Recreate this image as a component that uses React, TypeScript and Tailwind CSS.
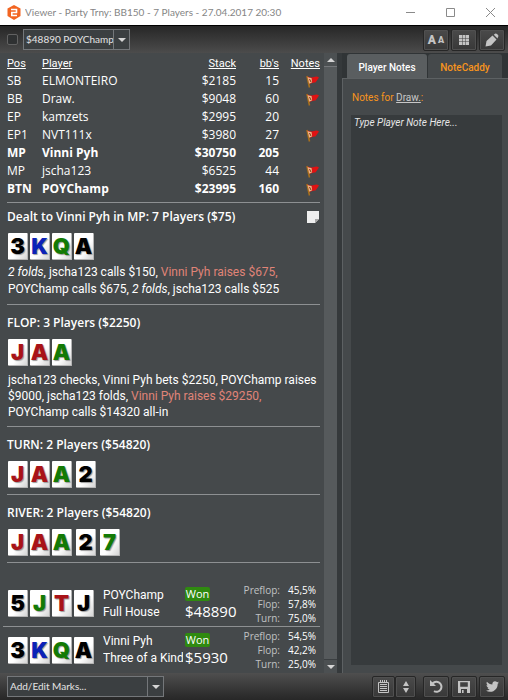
import { useState } from "react";
import clsx from "clsx";
import { FaTwitter } from "react-icons/fa";

const players = [
  { pos: "SB", name: "ELMONTEIRO", stack: "$2185", bbs: 15, note: true },
  { pos: "BB", name: "Draw.", stack: "$9048", bbs: 60, note: true },
  { pos: "EP", name: "kamzets", stack: "$2995", bbs: 20, note: false },
  { pos: "EP1", name: "NVT111x", stack: "$3980", bbs: 27, note: true },
  { pos: "MP", name: "Vinni Pyh", stack: "$30750", bbs: 205, note: false, bold: true },
  { pos: "MP", name: "jscha123", stack: "$6525", bbs: 44, note: true },
  { pos: "BTN", name: "POYChamp", stack: "$23995", bbs: 160, note: true, bold: true },
];

const results = [
  {
    cards: ["5s", "Jc", "Th", "Js"],
    name: "POYChamp",
    hand: "Full House",
    won: "$48890",
    odds: [["Preflop:", "45,5%"], ["Flop:", "57,8%"], ["Turn:", "75,0%"]],
  },
  {
    cards: ["3s", "Kd", "Qc", "As"],
    name: "Vinni Pyh",
    hand: "Three of a Kind",
    won: "$5930",
    odds: [["Preflop:", "54,5%"], ["Flop:", "42,2%"], ["Turn:", "25,0%"]],
  },
];

const suitColors: Record<string, string> = {
  s: "text-black",
  h: "text-[#a81318]",
  d: "text-[#0a22b8]",
  c: "text-[#137a05]",
};

function Card({ card }: { card: string }) {
  return (
    <span
      className={clsx(
        "flex h-[27px] w-5 items-center justify-center rounded-[1px] border-r border-b border-[#b5b5b5] bg-linear-to-br from-white from-60% to-[#d4d4d4] font-['Inter',sans-serif] text-[22px] leading-none font-black [text-shadow:1px_1px_1px_#999]",
        suitColors[card[1]]
      )}
    >
      {card[0]}
    </span>
  );
}

function Cards({ cards }: { cards: string[] }) {
  return (
    <div className="flex gap-0.5 pl-px">
      {cards.map((card, i) => (
        <Card key={i} card={card} />
      ))}
    </div>
  );
}

// Board cards, the turn and river stand a bit apart from the flop
function Board({ turn, river }: { turn?: string; river?: string }) {
  return (
    <div className="flex gap-1">
      <Cards cards={["Jh", "Ah", "Ac"]} />
      {turn && <Card card={turn} />}
      {river && <Card card={river} />}
    </div>
  );
}

function Flag() {
  return (
    <svg width="13" height="13" viewBox="0 0 13 13" className="ml-auto block">
      <path d="M1 1L3.5 12.5" stroke="#a8701c" strokeWidth="1.6" />
      <path d="M1.5 1.5Q5 3 8 2T13 2.5L9.5 7.5Q7 7 3.5 9Z" fill="#e01212" />
      <path d="M1.5 2Q3.5 3 5.5 3L6.2 7.2L3.2 8.8Z" fill="#e8b88a" />
      <path d="M3.5 4L5 7" stroke="#8a3010" />
    </svg>
  );
}

function ToolButton({ label, className, children }: { label: string; className?: string; children: React.ReactNode }) {
  return (
    <button
      aria-label={label}
      className={clsx(
        "flex h-[22px] items-center justify-center rounded-[2px] border border-[#262626] bg-linear-to-b from-[#4a4a4a] to-[#383838] text-[#c4c4c4] shadow-[inset_0_0_0_1px_#505050]",
        className ?? "w-[26px]"
      )}
    >
      {children}
    </button>
  );
}

function DropDown({ label, value, className }: { label: string; value: string; className: string }) {
  return (
    <div className={clsx("relative h-[21px] border border-[#74777a] bg-[#3b3f41]", className)}>
      <select
        aria-label={label}
        className="block h-full w-full appearance-none pr-3 pl-0.5 font-['Lato',sans-serif] text-[10px] leading-[19px] text-[#e4e4e4] outline-none"
      >
        <option>{value}</option>
      </select>
      <span className="pointer-events-none absolute inset-y-0 right-0 flex w-4 items-center justify-center border-l border-[#74777a]">
        <svg width="8" height="4" viewBox="0 0 8 4">
          <path d="M0 0H8L4 4Z" fill="#d5d5d5" />
        </svg>
      </span>
    </div>
  );
}

function StreetTitle({ children }: { children: React.ReactNode }) {
  return <h2 className="text-[12px] leading-4 font-semibold">{children}</h2>;
}

function TitleBar() {
  return (
    <header className="flex h-[25px] shrink-0 items-center bg-white pr-[13px] pl-[7px] text-[#858585]">
      <svg width="14" height="15" viewBox="0 0 14 15">
        <path d="M7 0L13.5 3.5V11L7 15L.5 11V3.5Z" fill="#f26522" />
        <path d="M4 4.5H9.5V7.5H4.8V10.5H10" fill="none" stroke="#fff" strokeWidth="1.6" />
      </svg>
      <h1 className="ml-1 flex-1 truncate font-['Lato',sans-serif] text-[10px]">
        Viewer - Party Trny: BB150 - 7 Players - 27.04.2017 20:30
      </h1>
      <div className="flex items-center gap-[31px]">
        <button aria-label="Minimize">
          <svg width="9" height="9" viewBox="0 0 9 9">
            <path d="M0 4.5H9" stroke="#8a8a8a" />
          </svg>
        </button>
        <button aria-label="Maximize">
          <svg width="9" height="9" viewBox="0 0 9 9">
            <path d="M.5 .5H8.5V8.5H.5Z" fill="none" stroke="#8a8a8a" />
          </svg>
        </button>
        <button aria-label="Close">
          <svg width="9" height="9" viewBox="0 0 9 9">
            <path d="M0 0L9 9M9 0L0 9" stroke="#8a8a8a" />
          </svg>
        </button>
      </div>
    </header>
  );
}

function Toolbar() {
  return (
    <div className="flex h-7 shrink-0 items-center border-t border-black bg-linear-to-b from-[#272727] to-[#4c4c4c] pr-[3px] pl-[7px]">
      <input
        type="checkbox"
        aria-label="Mark hand"
        className="size-[11px] appearance-none rounded-[2px] border border-[#626262] bg-[#2f3132]"
      />
      <DropDown label="Hand" value="$48890 POYChamp" className="ml-[5px] w-[107px]" />
      <div className="ml-auto flex gap-0.5">
        <ToolButton label="Text size">
          <span className="font-['Roboto',sans-serif] text-[12px] leading-none font-black">A</span>
          <span className="ml-[2px] pt-[2px] font-['Roboto',sans-serif] text-[9px] leading-none font-black">A</span>
        </ToolButton>
        <ToolButton label="Grid">
          <svg width="10" height="10" viewBox="0 0 10 10" fill="currentColor">
            <path d="M0 0H3V3H0ZM3.5 0H6.5V3H3.5ZM7 0H10V3H7ZM0 3.5H3V6.5H0ZM3.5 3.5H6.5V6.5H3.5ZM7 3.5H10V6.5H7ZM0 7H3V10H0ZM3.5 7H6.5V10H3.5ZM7 7H10V10H7Z" />
          </svg>
        </ToolButton>
        <ToolButton label="Edit">
          <svg width="14" height="14" viewBox="0 0 14 14" fill="currentColor">
            <path d="M.5 13.5L1.5 8L7.5 2.5L11.5 6.5L6 12.5ZM8.8 1.7L10 .8Q11 0 12 1L13 2Q14 3 13 4L12.5 5.4Z" />
          </svg>
        </ToolButton>
      </div>
    </div>
  );
}

function PlayerTable() {
  return (
    <table className="w-full table-fixed text-[12px]">
      <thead>
        <tr className="h-[17px] font-['Roboto',sans-serif] text-[11px] leading-4 underline">
          <th className="w-[35px] text-left font-normal">Pos</th>
          <th className="text-left font-normal">Player</th>
          <th className="w-[60px] text-right font-normal">Stack</th>
          <th className="w-[43px] text-right font-normal">bb's</th>
          <th className="w-[41px] text-right font-normal">Notes</th>
        </tr>
      </thead>
      <tbody>
        {players.map((p) => (
          <tr key={p.name} className={clsx("h-[18px] leading-[18px]", p.bold && "font-bold")}>
            <td>{p.pos}</td>
            <td>{p.name}</td>
            <td className="text-right">{p.stack}</td>
            <td className="text-right">{p.bbs}</td>
            <td className="pr-px">{p.note && <Flag />}</td>
          </tr>
        ))}
      </tbody>
    </table>
  );
}

function ScrollBar() {
  return (
    <div className="flex w-[13px] shrink-0 flex-col bg-[#565a5c]">
      <button aria-label="Scroll up" className="flex h-[14px] items-center justify-center border-b border-[#74777a] bg-[#4c5052]">
        <svg width="8" height="4" viewBox="0 0 8 4">
          <path d="M0 4H8L4 0Z" fill="#d5d5d5" />
        </svg>
      </button>
      <div className="flex-1" />
      <button aria-label="Scroll down" className="flex h-[14px] items-center justify-center border-t border-[#3b3f41] bg-[#4c5052]">
        <svg width="8" height="4" viewBox="0 0 8 4">
          <path d="M0 0H8L4 4Z" fill="#d5d5d5" />
        </svg>
      </button>
    </div>
  );
}

function NotesPanel() {
  const [tab, setTab] = useState("Player Notes");

  return (
    <aside className="flex w-[166px] shrink-0 flex-col bg-[#303436] font-['Roboto',sans-serif]">
      <div className="flex gap-px pt-px pl-[5px]">
        {["Player Notes", "NoteCaddy"].map((name) => (
          <button
            key={name}
            onClick={() => setTab(name)}
            className={clsx(
              "h-6 rounded-t-[3px] pt-0.5 text-[10px] font-medium",
              name === tab ? "w-20 bg-[#5a5e60] text-white" : "w-[74px] bg-[#45494b] text-[#f7941d]"
            )}
          >
            {name}
          </button>
        ))}
      </div>
      <div className="flex flex-1 flex-col border-t border-l border-[#5d6163] bg-[#45494b] pr-1.5 pb-2 pl-2">
        <label htmlFor="note" className="pt-2.5 pl-px text-[10px] leading-[18px] text-[#f7941d]">
          Notes for <a href="#draw" className="text-[#c8c8c8] underline">Draw.</a>:
        </label>
        <textarea
          id="note"
          placeholder="Type Player Note Here..."
          className="mt-2 w-full flex-1 resize-none bg-[#373b3d] px-[3px] text-[10px] leading-4 text-white italic outline-none placeholder:text-[#e6e6e6]"
        />
      </div>
    </aside>
  );
}

function Footer() {
  return (
    <footer className="flex h-[27px] shrink-0 items-center bg-linear-to-b from-[#4f4f4f] to-[#272727] pr-[3px] pl-[7px]">
      <DropDown label="Marks" value="Add/Edit Marks..." className="w-[157px]" />
      <div className="ml-auto flex gap-0.5">
        <div className="mr-[5px] flex">
          <ToolButton label="Hand log" className="w-[23px]">
            <svg width="11" height="13" viewBox="0 0 11 13" fill="none" stroke="currentColor">
              <path d="M.5 2.5H10.5V12.5H.5ZM2 4.5H9M2 6.5H9M2 8.5H9M2 10.5H9M2.5 0V2M4.5 0V2M6.5 0V2M8.5 0V2" />
            </svg>
          </ToolButton>
          <ToolButton label="Previous or next" className="w-[21px]">
            <svg width="6" height="12" viewBox="0 0 6 12" fill="currentColor">
              <path d="M3 0L6 5H0ZM0 7H6L3 12Z" />
            </svg>
          </ToolButton>
        </div>
        <ToolButton label="Replay">
          <svg width="14" height="13" viewBox="0 0 14 13" fill="none" stroke="currentColor" strokeWidth="2">
            <path d="M3 4.5A5 5 0 1 1 5 11.2" />
            <path d="M1 0V6H7Z" fill="currentColor" stroke="none" />
          </svg>
        </ToolButton>
        <ToolButton label="Save">
          <svg width="12" height="12" viewBox="0 0 12 12" fill="currentColor">
            <path fillRule="evenodd" d="M0 0H12V12H0ZM2.2 1.2V5.8H9.8V1.2ZM3 8V12H9V8ZM4 9H5.6V12H4Z" />
          </svg>
        </ToolButton>
        <ToolButton label="Tweet">
          <FaTwitter size={13} />
        </ToolButton>
      </div>
    </footer>
  );
}

export default function App() {
  return (
    <div className="flex min-h-screen flex-col bg-[#45494b] font-['Open_Sans','Noto_Sans',sans-serif] text-white">
      <TitleBar />
      <Toolbar />

      <div className="flex flex-1">
        <main className="flex min-w-0 flex-1 flex-col pt-0.5 pr-1 pl-[7px] text-[12px] leading-4">
          <PlayerTable />

          {/* Preflop */}
          <section className="mt-1 border-t border-[#8d9092] pt-1.5 pb-1.5">
            <div className="flex items-center justify-between pr-px">
              <StreetTitle>Dealt to Vinni Pyh in MP: 7 Players ($75)</StreetTitle>
              <svg width="12" height="12" viewBox="0 0 12 12">
                <path d="M0 0H12V8L8 12H0Z" fill="#efefef" />
                <path d="M12 8H8V12Z" fill="#a8a8a8" />
              </svg>
            </div>
            <div className="mt-2 mb-1">
              <Cards cards={["3s", "Kd", "Qc", "As"]} />
            </div>
            <p className="pl-px font-['Roboto',sans-serif] leading-[17px]">
              <i>2 folds</i>, jscha123 calls $150, <span className="text-[#e08478]">Vinni Pyh raises $675,</span>
              <br />
              POYChamp calls $675, <i>2 folds</i>, jscha123 calls $525
            </p>
          </section>

          {/* Flop */}
          <section className="border-t border-[#8d9092] pt-2.5 pb-1.5">
            <StreetTitle>FLOP: 3 Players ($2250)</StreetTitle>
            <div className="mt-2 mb-1.5">
              <Board />
            </div>
            <p className="pl-px font-['Roboto',sans-serif]">
              jscha123 checks, Vinni Pyh bets $2250, POYChamp raises
              <br />
              $9000, jscha123 folds, <span className="text-[#e08478]">Vinni Pyh raises $29250,</span>
              <br />
              POYChamp calls $14320 all-in
            </p>
          </section>

          {/* Turn */}
          <section className="border-t border-[#8d9092] pt-2.5 pb-1.5">
            <StreetTitle>TURN: 2 Players ($54820)</StreetTitle>
            <div className="mt-2">
              <Board turn="2s" />
            </div>
          </section>

          {/* River */}
          <section className="border-y border-[#8d9092] pt-2.5 pb-1.5">
            <StreetTitle>RIVER: 2 Players ($54820)</StreetTitle>
            <div className="mt-2">
              <Board turn="2s" river="7c" />
            </div>
          </section>

          {/* Showdown */}
          <div className="mt-auto -ml-1 divide-y divide-[#8d9092]">
            {results.map((r) => (
              <div key={r.name} className="flex h-[46px] items-center pl-1">
                <Cards cards={r.cards} />
                <div className="ml-[9px] w-20 shrink-0 overflow-hidden font-['Roboto',sans-serif] leading-[17px] whitespace-nowrap">
                  <p>{r.name}</p>
                  <p>{r.hand}</p>
                </div>
                <div className="ml-0.5">
                  <span className="block w-[25px] rounded-[2px] bg-[#2f8a10] text-center text-[11px] leading-[14px]">Won</span>
                  <p className="text-[15px] leading-5">{r.won}</p>
                </div>
                <dl className="ml-auto grid grid-cols-[auto_auto] gap-x-2 pr-1 text-right text-[10px] leading-[14px]">
                  {r.odds.map(([street, value]) => (
                    <div key={street} className="contents">
                      <dt className="text-[#c0c2c3]">{street}</dt>
                      <dd>{value}</dd>
                    </div>
                  ))}
                </dl>
              </div>
            ))}
          </div>
        </main>

        <ScrollBar />
        <div className="w-[5px] shrink-0 bg-[#35393b]" />
        <NotesPanel />
      </div>

      <Footer />
    </div>
  );
}
